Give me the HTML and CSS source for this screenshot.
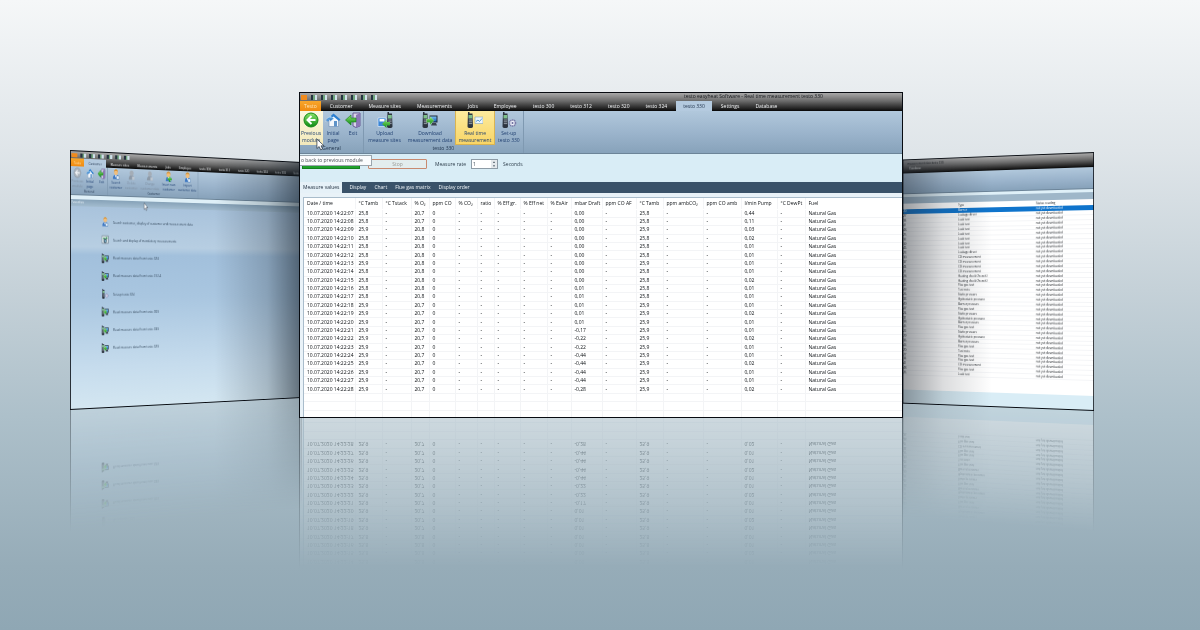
FILE: index.html
```html
<!DOCTYPE html>
<html lang="en">
<head>
<meta charset="utf-8">
<meta name="viewport" content="width=device-width, initial-scale=1">
<title>testo easyheat Software</title>
<link rel="stylesheet" href="styles.css">
</head>
<body>
<svg class="defs" aria-hidden="true">
  <defs>
    <linearGradient id="g-green" x1="0" y1="0" x2="0" y2="1"><stop offset="0" stop-color="#8be36b"/><stop offset="1" stop-color="#0c8a14"/></linearGradient>
    <linearGradient id="g-blue" x1="0" y1="0" x2="0" y2="1"><stop offset="0" stop-color="#79c3f2"/><stop offset="1" stop-color="#1860b4"/></linearGradient>
  </defs>
  <symbol id="i-back" viewBox="0 0 16 16"><circle cx="8" cy="8" r="7" fill="url(#g-green)" stroke="#188a1c"/><path d="M8.500 4 4.500 8l4 4M5 8h7.500" fill="none" stroke="#fff" stroke-width="2"/></symbol>
  <symbol id="i-back-off" viewBox="0 0 16 16"><circle cx="8" cy="8" r="7" fill="#aab3bd" stroke="#8c97a3"/><path d="M8.500 4 4.500 8l4 4M5 8h7.500" fill="none" stroke="#eef1f4" stroke-width="2"/></symbol>
  <symbol id="i-home" viewBox="0 0 16 16"><path d="M4 8v6.500h9.500V7L9 3z" fill="#f4f8fc" stroke="#6a8cb4" stroke-width=".6"/><path d="M1 8.500 8.500 1.500 15.500 7.500 14 9 8.500 4.500 3 9.500z" fill="#2c7fd0"/><path d="M9 9h3v5.500H9z" fill="#5e93c8"/><path d="M.5 9.500c1-4 4-4.500 5-4L5 4l4 2.500-4 3V8c-1.500-.5-3 0-4.500 1.500z" fill="url(#g-blue)" stroke="#dbeefc" stroke-width=".4"/></symbol>
  <symbol id="i-exit" viewBox="0 0 16 16"><path d="M8 1h7v13l-4 1.500L8 14z" fill="#d8d4e8" stroke="#6a5c96"/><path d="M11 3l4-2v13l-4 1.500z" fill="#8b78b6"/><path d="M.5 8 6 3v3h5v4H6v3z" fill="url(#g-green)" stroke="#157a1a" stroke-width=".6"/></symbol>
  <symbol id="i-phone" viewBox="0 0 16 16"><path d="M5.500 0h1.500v1.500h3l.5 13c0 2-5.500 2-5.500 0z" fill="#2d3540"/><path d="M6 3h3.800v3.600H6z" fill="#7fc08c"/><path d="M6.300 8h3.400M6.300 9.800h3.400M6.300 11.600h3.400" stroke="#a9b2bd" stroke-width=".8"/></symbol>
  <symbol id="i-upload" viewBox="0 0 16 16"><use href="#i-phone" x="5"/><path d="M1 6h8v8.500H1z" fill="#3a86d6" stroke="#dbeafc" stroke-width=".7"/><path d="M2.500 7h5v2.500h-5z" fill="#fff"/><path d="M5 12 9.500 7.500V10H13v3.500H9.500V16z" fill="url(#g-green)"/></symbol>
  <symbol id="i-download" viewBox="0 0 16 16"><use href="#i-phone" x="-4.500"/><path d="M7.500 3.500h8v7h-8z" fill="#202a38"/><path d="M8.500 4.500h6v5h-6z" fill="url(#g-blue)"/><path d="M10 11h4l1 2.500H9z" fill="#39424e"/><path d="M12 8.500 8 4.500V7H4.500v3.500H8V13z" fill="url(#g-green)" stroke="#e8ffe0" stroke-width=".3"/></symbol>
  <symbol id="i-live" viewBox="0 0 16 16"><use href="#i-phone" x="-4.500"/><path d="M8 5h8v6.500H8z" fill="#edf6fd" stroke="#80a5c4" stroke-width=".6"/><path d="M9 9.500 11 8l1.500 1.500L15 6.500" fill="none" stroke="#3a86c6" stroke-width=".8"/></symbol>
  <symbol id="i-setup" viewBox="0 0 16 16"><use href="#i-phone" x="-3.500"/><circle cx="11.500" cy="11" r="3" fill="#eef0fa" stroke="#7a7ca8" stroke-width="1.600" stroke-dasharray="1.400 .5"/><circle cx="11.500" cy="11" r="1" fill="#6a6c9c"/></symbol>
  <symbol id="i-person" viewBox="0 0 16 16"><path d="M2 15c0-6 3-6.500 6-6.500s6 .5 6 6.500z" fill="#3e79c4"/><path d="M6 9h4l-2 4z" fill="#fff"/><circle cx="8" cy="5" r="3.800" fill="#f0bd7c"/><path d="M4 5c-.5-6 8.500-6 8 0-1-2-2-2.500-4-2.500S5 3 4 5z" fill="#d98a1e"/><path d="M9 10h5v5H9z" fill="#e9f3fb" stroke="#356da8" stroke-width=".6"/></symbol>
  <symbol id="i-person-add" viewBox="0 0 16 16"><use href="#i-person"/><path d="M6 10h3V7.500h3V10h3v3h-3v2.500H9V13H6z" fill="url(#g-green)"/></symbol>
  <symbol id="i-person-off" viewBox="0 0 16 16"><path d="M2 15c0-6 3-6.500 6-6.500s6 .5 6 6.500z" fill="#8d9aa8"/><circle cx="8" cy="5" r="4" fill="#a4adb7"/><path d="M9 10h5v5H9z" fill="#bcc6d0"/></symbol>
  <symbol id="i-report" viewBox="0 0 16 16"><path d="M1 2h14v12H1z" fill="#e6eef0" stroke="#5d6d78"/><path d="M3 5h5v2H3zM9 4h4v3H9z" fill="#3a9a58"/><circle cx="8" cy="10" r="3.500" fill="#34495e"/><path d="M6 10l2-2 3 3-2 1z" fill="#8fd0e6"/></symbol>
  <symbol id="i-cursor" viewBox="0 0 10 14"><path d="M1 1v10.500L3.500 9.300 5.300 13l2-1L5.600 8.500H9z" fill="#fff" stroke="#23303c" stroke-width=".8"/></symbol>
</svg>

<main class="scene">
  <section class="slot slot-side" aria-label="Customer page">
    <div class="panel panel-left">
      <header class="chrome">
        <div class="quick"><i class="dot-orange"></i><i></i><i></i><i></i><i></i><i></i><i></i></div>
        <nav class="tabs">
          <button class="tab tab-app">Testo</button><button class="tab tab-on">Customer</button><button class="tab">Measure sites</button><button class="tab">Measurements</button><button class="tab">Jobs</button><button class="tab">Employee</button><button class="tab">testo 300</button><button class="tab">testo 312</button><button class="tab">testo 320</button><button class="tab">testo 324</button><button class="tab">testo 330</button><button class="tab">Settings</button>
        </nav>
      </header>
      <div class="ribbon">
        <div class="group">
          <div class="tools">
            <button class="tool tool-off"><svg><use href="#i-back-off"/></svg><span>Previous<br>module</span></button>
            <button class="tool"><svg><use href="#i-home"/></svg><span>Initial<br>page</span></button>
            <button class="tool"><svg><use href="#i-exit"/></svg><span>Exit</span></button>
          </div>
          <div class="group-name">General</div>
        </div>
        <div class="group group-customer">
          <div class="tools">
            <button class="tool"><svg><use href="#i-person"/></svg><span>Search<br>customer</span></button>
            <button class="tool tool-off"><svg><use href="#i-person-off"/></svg><span>Delete<br>customer</span></button>
            <button class="tool tool-off"><svg><use href="#i-person-off"/></svg><span>Change<br>customer data</span></button>
            <button class="tool"><svg><use href="#i-person-add"/></svg><span>Insert new<br>customer</span></button>
            <button class="tool"><svg><use href="#i-person"/></svg><span>Import<br>customer data</span></button>
          </div>
          <div class="group-name">Customer</div>
        </div>
      </div>
      <div class="strip"></div>
      <h2 class="heading">Favorites</h2>
      <div class="favorites">
        <ul class="fav-list">
          <li><svg><use href="#i-person"/></svg><a href="#">Search customer, display of customer and measurement data</a></li>
          <li><svg><use href="#i-report"/></svg><a href="#">Search and display of mandatory measurements</a></li>
          <li><svg><use href="#i-download"/></svg><a href="#">Read measure data from testo 324</a></li>
          <li><svg><use href="#i-download"/></svg><a href="#">Read measure data from testo 312-4</a></li>
          <li><svg><use href="#i-setup"/></svg><a href="#">Set-up testo 324</a></li>
          <li><svg><use href="#i-download"/></svg><a href="#">Read measure data from testo 300</a></li>
          <li><svg><use href="#i-download"/></svg><a href="#">Read measure data from testo 330</a></li>
          <li><svg><use href="#i-download"/></svg><a href="#">Read measure data from testo 320</a></li>
        </ul>
      </div>
      <svg class="pointer pointer-left"><use href="#i-cursor"/></svg>
    </div>
  </section>

  <section class="slot slot-front" aria-label="Real time measurement">
    <div class="panel panel-main">
      <header class="chrome">
        <div class="titlebar">
          <div class="quick"><i class="dot-orange"></i><i></i><i></i><i></i><i></i><i></i><i></i><i></i></div>
          <div class="title">testo easyheat Software - Real time measurement testo 330</div>
        </div>
        <nav class="tabs">
          <button class="tab tab-app">Testo</button><button class="tab">Customer</button><button class="tab">Measure sites</button><button class="tab">Measurements</button><button class="tab">Jobs</button><button class="tab">Employee</button><button class="tab">testo 300</button><button class="tab">testo 312</button><button class="tab">testo 320</button><button class="tab">testo 324</button><button class="tab tab-on">testo 330</button><button class="tab">Settings</button><button class="tab">Database</button>
        </nav>
      </header>
      <div class="ribbon">
        <div class="group">
          <div class="tools">
            <button class="tool tool-hover"><svg><use href="#i-back"/></svg><span>Previous<br>module</span></button>
            <button class="tool"><svg><use href="#i-home"/></svg><span>Initial<br>page</span></button>
            <button class="tool"><svg><use href="#i-exit"/></svg><span>Exit</span></button>
          </div>
          <div class="group-name">General</div>
        </div>
        <div class="group group-device">
          <div class="tools">
            <button class="tool tool-wide"><svg><use href="#i-upload"/></svg><span>Upload<br>measure sites</span></button>
            <button class="tool tool-wider"><svg><use href="#i-download"/></svg><span>Download<br>measurement data</span></button>
            <button class="tool tool-active"><svg><use href="#i-live"/></svg><span>Real time<br>measurement</span></button>
            <button class="tool"><svg><use href="#i-setup"/></svg><span>Set-up<br>testo 330</span></button>
          </div>
          <div class="group-name">testo 330</div>
        </div>
      </div>
      <form class="controls">
        <button type="button" class="start" aria-label="Start"></button>
        <button type="button" class="stop" disabled>Stop</button>
        <label for="rate">Measure rate</label>
        <span class="spin"><input id="rate" type="text" value="1"><span class="spin-arrows"><b>▲</b><b>▼</b></span></span>
        <span>Seconds</span>
      </form>
      <nav class="views">
        <button class="view view-on">Measure values</button><button class="view">Display</button><button class="view">Chart</button><button class="view">Flue gas matrix</button><button class="view">Display order</button>
      </nav>
      <div class="sheet">
        <table class="values">
          <colgroup id="value-cols"></colgroup>
          <thead><tr id="value-head"></tr></thead>
          <tbody id="value-rows"></tbody>
        </table>
      </div>
      <div class="hint" role="tooltip">o back to previous module</div>
      <svg class="pointer pointer-main"><use href="#i-cursor"/></svg>
    </div>
  </section>

  <section class="slot slot-side slot-last" aria-label="Download list">
    <div class="panel panel-right">
      <header class="chrome">
        <div class="title">measurement data testo 330</div>
        <nav class="tabs"><button class="tab">Database</button></nav>
      </header>
      <div class="ribbon"></div>
      <div class="strip"></div>
      <div class="heading"></div>
      <div class="list-body">
        <table class="downloads">
          <thead><tr><th class="c-no"></th><th class="c-type">Type</th><th>Status reading</th></tr></thead>
          <tbody id="download-rows"></tbody>
        </table>
      </div>
    </div>
  </section>
</main>
<script src="script.js"></script>
</body>
</html>
```
FILE: styles.css
```css
* { box-sizing: border-box; }

body {
  margin: 0;
  min-height: 100vh;
  font: 500 5px/7px "Open Sans", "Noto Sans", sans-serif;
  color: #10161d;
  background: linear-gradient(#f5f7f8 0%, #dfe5e9 24%, #c5d1d8 46%, #adc0ca 66%, #96acb8 90%, #8fa7b4 100%);
}

button, input { font: inherit; color: inherit; }
button { border: 0; padding: 0; background: none; white-space: nowrap; }
a { color: inherit; text-decoration: none; }
svg { display: block; }
.defs { position: absolute; width: 0; height: 0; }

.scene {
  display: grid;
  grid-template-columns: 229fr 604fr 191fr;
  align-items: start;
  min-height: 100vh;
  padding: 92px 106px 0 70px;
  overflow: hidden;
}
.slot { min-width: 0; }
.slot-side { margin-top: 58px; }
.slot-last { margin-top: 60px; }
.slot-front { position: relative; z-index: 1; }

.panel {
  position: relative;
  display: flex;
  flex-direction: column;
  overflow: hidden;
  border: 1px solid #070b11;
  background: #d9edf6;
  -webkit-box-reflect: below -1px linear-gradient(transparent 53%, rgba(0, 0, 0, .2) 72%, rgba(0, 0, 0, .42) 100%);
}
.panel-main { height: 326px; -webkit-box-reflect: below -3px linear-gradient(transparent 53%, rgba(0, 0, 0, .18) 72%, rgba(0, 0, 0, .4) 100%); }

/* side windows turn away from the viewer */
.panel-left {
  width: 150%;
  height: 260px;
  font-size: 4px;
  line-height: 5px;
  transform-origin: left center;
  transform: perspective(2258px) rotateY(42deg);
}
.panel-right {
  width: 143%;
  height: 259px;
  margin-left: -43%;
  font-size: 4px;
  line-height: 4px;
  transform-origin: right center;
  transform: perspective(3016px) rotateY(-42deg);
}
.panel-left::after, .panel-right::after {
  content: "";
  position: absolute;
  inset: 0;
  pointer-events: none;
}
.panel-left::after { background: linear-gradient(to right, transparent 60%, rgba(22, 32, 42, .22) 84%, rgba(22, 32, 42, .6) 100%); }
.panel-right::after { background: linear-gradient(to left, transparent 52%, rgba(32, 38, 46, .16) 78%, rgba(32, 38, 46, .45) 100%); }

/* title bar and tabs */
.chrome { flex: none; background: linear-gradient(#a9a9a9, #6a6a6a 45%, #1c1c1c 90%, #050505); }
.titlebar { display: flex; align-items: center; height: 8px; }
.quick { display: flex; align-items: center; gap: 4px; height: 6px; padding-left: 1px; }
.quick i { width: 6px; height: 5px; background: linear-gradient(90deg, #263340 35%, #6fa47c 35% 60%, #cfe0ea 60%); }
.quick .dot-orange { background: #f08a1c; }
.titlebar .title { margin-left: 307px; color: #15181c; line-height: 6px; align-self: start; white-space: nowrap; }
.tabs { display: flex; gap: 2px; height: 10px; }
.tab { flex: none; padding: 0 7px; color: #f0f2f4; }
.tab-app { padding: 0 4px; color: #fde6b8; background: linear-gradient(#f7a62c, #f08a10); }
.tab-on { color: #22354e; background: #b4cadf; }

/* ribbon */
.ribbon {
  flex: none;
  display: flex;
  height: 43px;
  color: #1f3f70;
  background: linear-gradient(#b1c8dc, #9ab3cb 55%, #87a2ba);
  border-bottom: 1px solid #6c8498;
}
.group { display: flex; flex-direction: column; border-right: 1px solid #7f99b1; }
.tools { display: flex; flex: 1; }
.tool { display: flex; flex-direction: column; align-items: center; gap: 2px; padding: 1px 2px 0; }
.tool svg { width: 16px; height: 16px; }
.tool-hover { padding: 1px 2px 0 1px; background: linear-gradient(#fbf8e0, #f3e9bb); }
.tool-active { background: linear-gradient(#fdeb9e, #f8d566); border: 1px solid #d9b452; border-top: 0; }
.tool-off { color: #7e8ea0; }
.group-name { text-align: center; height: 8px; color: #22364e; }
.panel-main .tools { height: 34px; flex: none; }
.group-device .tool { padding: 1px 3px 0; }
.group-device .tool-wide { width: 41px; }
.group-device .tool-wider { width: 50px; padding: 1px 0 0; }
.group-device .tool-active { width: 40px; }

/* measuring controls */
.controls { flex: none; display: flex; align-items: center; gap: 8px; height: 28px; padding: 0 0 8px 2px; color: #30404e; }
.start { width: 58px; height: 10px; background: #20a02c; border: 1px solid #14801e; }
.stop { width: 59px; height: 10px; line-height: 6px; color: #9a9a96; background: #e3edee; border: 1px solid #c88a70; border-radius: 1px; }
.spin { display: flex; width: 27px; height: 10px; margin: 0 -3px; background: #fff; border: 1px solid #8d9ba6; }
.spin input { flex: 1; min-width: 0; padding: 0 1px; border: 0; outline: 0; background: none; }
.spin-arrows { display: flex; flex-direction: column; width: 6px; background: #e5e9ec; }
.spin-arrows b { flex: 1; font-size: 3px; line-height: 4px; text-align: center; }

.views { flex: none; display: flex; height: 11px; background: #3a5269; }
.view { padding: 0 4px; color: #eef3f7; }
.view:first-child { padding: 0 3px; margin-right: 3px; }
.view-on { color: #1c2c3c; background: #e6f1f8; }

/* value table */
.sheet { flex: 1; min-height: 0; padding: 5px 0 0 4px; background: #e9f2f8; overflow: hidden; }
table { border-collapse: collapse; table-layout: fixed; width: 100%; }
.values { height: 221px; background: #fff; outline: 1px solid #a9bccb; color: #0c1014; }
.values th, .values td { padding: 0 0 0 3px; border: solid #f3f4f6; border-width: 0 1px 1px 0; text-align: left; font-weight: 500; white-space: nowrap; line-height: 7px; }
.values thead tr { height: 11px; }
.values th { border-bottom-color: #fff; }

/* overlays */
.hint {
  position: absolute;
  left: 0;
  top: 62px;
  padding: 0 8px 0 1px;
  line-height: 9px;
  white-space: nowrap;
  color: #4a5056;
  background: #fbfcfd;
  border: solid #9aa5ad;
  border-width: 1px 1px 1px 0;
}
.pointer { position: absolute; z-index: 2; }
.pointer-main { left: 16px; top: 45px; width: 9px; height: 13px; }
.pointer-left { left: 101px; top: 49px; width: 7px; height: 9px; }

/* left window */
.panel-left .quick { height: 7px; gap: 4px; }
.panel-left .quick i { width: 8px; height: 4px; }
.panel-left .tabs { height: 8px; gap: 0; }
.panel-left .tab { padding: 0 6px; }
.panel-left .tab-app { padding: 0 4px; }
.panel-left .ribbon { height: 29px; }
.panel-left .tool { gap: 0; padding: 1px 1px 0; }
.panel-left .tool svg { width: 14px; height: 11px; }
.panel-left .group-name { height: 6px; }
.panel-left .group-customer .tool { padding: 1px 2px 0; }
.strip { flex: none; height: 4px; background: #dff0f8; }
.heading { flex: none; height: 7px; margin: 0; padding-left: 1px; font-size: 4px; font-weight: 400; line-height: 6px; color: #eef5fa; background: linear-gradient(#86a2b8, #a3bccf); }
.favorites { flex: 1; padding: 6px 0 0 41px; background: linear-gradient(#a9c3dc, #b7cee2 20%, #a2c0dc 24%, #a9c6e0 45%, #c6dced 80%, #d3e6f1); }
.fav-list { display: grid; grid-auto-rows: 1fr; height: 146px; margin: 0; padding: 0; list-style: none; color: #34485c; }
.fav-list li { display: flex; align-items: center; gap: 5px; white-space: nowrap; }
.fav-list svg { width: 12px; height: 10px; }

/* right window */
.panel-right .chrome { height: 14px; padding-left: 6px; }
.panel-right .title { height: 6px; line-height: 7px; color: #1b1e22; }
.panel-right .tabs { height: 6px; }
.panel-right .tab { padding: 0 3px; }
.panel-right .ribbon { height: 22px; }
.panel-right .strip { height: 3px; }
.panel-right .heading { background: #9fb7c9; }
.list-body { flex: none; height: 197px; background: #fff; }
.downloads { height: 182px; color: #10151a; }
.downloads th, .downloads td { padding: 0; border: 0; text-align: left; font-weight: 500; line-height: 4px; white-space: nowrap; }
.downloads td { box-shadow: inset 0 -1px #f4f5f7; }
.downloads thead tr { height: 6px; }
.downloads .c-no { width: 30%; }
.downloads .c-type { width: 41%; }
.downloads .picked { color: #fff; background: #0f74cc; }
.downloads .picked td { box-shadow: none; }
```
FILE: script.js
```js
const columns = [
  ["Date / time", 51], ["°C Tamb", 27], ["°C Tstack", 29], ["% O₂", 18], ["ppm CO", 26], ["% CO₂", 22],
  ["ratio", 17], ["% Eff gr.", 26], ["% Eff net", 27], ["% ExAir", 24], ["mbar Draft", 31], ["ppm CO AF", 34],
  ["°C Tamb", 27], ["ppm ambCO₂", 40], ["ppm CO amb", 38], ["l/min Pump", 36], ["°C DewPt", 28], ["Fuel", 97]
];
// second, ambient temperature, oxygen, draft, pump
const samples = [
  ["07", "25,8", "20,7", "0,00", "0,44"], ["08", "25,8", "20,7", "0,00", "0,11"], ["09", "25,9", "20,8", "0,00", "0,03"],
  ["10", "25,8", "20,8", "0,00", "0,02"], ["11", "25,8", "20,8", "0,00", "0,01"], ["12", "25,8", "20,8", "0,00", "0,01"],
  ["13", "25,9", "20,8", "0,00", "0,01"], ["14", "25,8", "20,8", "0,00", "0,01"], ["15", "25,8", "20,8", "0,00", "0,02"],
  ["16", "25,8", "20,8", "0,01", "0,01"], ["17", "25,8", "20,8", "0,01", "0,01"], ["18", "25,9", "20,7", "0,01", "0,01"],
  ["19", "25,9", "20,7", "0,01", "0,02"], ["20", "25,9", "20,7", "0,01", "0,01"], ["21", "25,9", "20,7", "-0,17", "0,01"],
  ["22", "25,9", "20,7", "-0,22", "0,02"], ["23", "25,9", "20,7", "-0,22", "0,01"], ["24", "25,9", "20,7", "-0,44", "0,01"],
  ["25", "25,9", "20,7", "-0,44", "0,02"], ["26", "25,9", "20,7", "-0,44", "0,01"], ["27", "25,9", "20,7", "-0,44", "0,01"],
  ["28", "25,9", "20,7", "-0,28", "0,02"]
];
const row = (cells, cls = "") => `<tr class="${cls}">${cells.map(c => `<td>${c}</td>`).join("")}</tr>`;

document.getElementById("value-cols").innerHTML = columns.map(c => `<col style="width:${c[1]}px">`).join("");
document.getElementById("value-head").innerHTML = columns.map(c => `<th>${c[0]}</th>`).join("");
document.getElementById("value-rows").innerHTML =
  samples.map(([s, t, o, d, p]) => row(["10.07.2020 14:22:" + s, t, "-", o, "0", "-", "-", "-", "-", "-", d, "-", t, "-", "-", p, "-", "Natural Gas"])).join("") +
  row(Array(18).fill("&nbsp;")).repeat(3);

const cycle = ["Static pressure", "Hydrostatic pressure", "Burner pressure", "Flue gas test"];
const types = ["Burner", "Leakage direct", ...Array(7).fill("Leak test"), "Leakage direct", ...Array(4).fill("CO measurement"),
  "Heating check (French)", "Heating check (French)", "Flue gas test", "Test note", ...cycle, ...cycle, ...cycle,
  "Test note", "Flue gas test", "Flue gas test", "CO measurement", "Flue gas test", "Leak test"];
document.getElementById("download-rows").innerHTML =
  types.map((t, i) => row([String(20 + (i * 7) % 30), t, "not yet downloaded"], i ? "" : "picked")).join("");
```
